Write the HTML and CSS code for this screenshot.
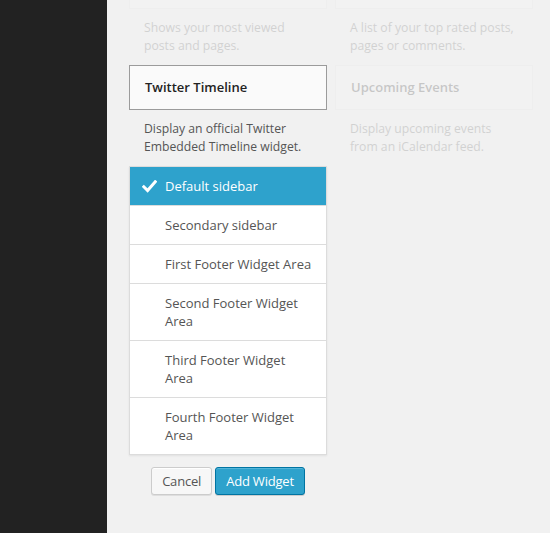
FILE: index.html
```
<!DOCTYPE html>
<html>
<head>
<meta charset="utf-8">
<link rel="stylesheet" href="styles.css">
</head>
<body>
<div class="layout">
  <aside class="adminmenu"></aside>
  <main class="content">
    <div class="widgets">
      <div class="widget faded">
        <div class="widget-top"></div>
        <p class="widget-desc">Shows your most viewed posts and pages.</p>
      </div>
      <div class="widget faded">
        <div class="widget-top"></div>
        <p class="widget-desc">A list of your top rated posts, pages or comments.</p>
      </div>
      <div class="widget">
        <div class="widget-top active"><span class="widget-title">Twitter Timeline</span></div>
        <p class="widget-desc">Display an official Twitter Embedded Timeline widget.</p>
        <div class="chooser">
          <ul class="sidebars">
            <li class="selected"><span class="slot"><svg width="15" height="13" viewBox="0 0 15 13"><polyline points="1.8,6.8 5.6,10.6 13.2,1.8" fill="none" stroke="#fff" stroke-width="3" stroke-linecap="square" stroke-linejoin="miter"/></svg></span><span>Default sidebar</span></li>
            <li><span class="slot"></span><span>Secondary sidebar</span></li>
            <li><span class="slot"></span><span>First Footer Widget Area</span></li>
            <li><span class="slot"></span><span>Second Footer Widget Area</span></li>
            <li><span class="slot"></span><span>Third Footer Widget Area</span></li>
            <li><span class="slot"></span><span>Fourth Footer Widget Area</span></li>
          </ul>
          <div class="actions">
            <button class="btn">Cancel</button>
            <button class="btn primary">Add Widget</button>
          </div>
        </div>
      </div>
      <div class="widget faded">
        <div class="widget-top"><span class="widget-title">Upcoming Events</span></div>
        <p class="widget-desc">Display upcoming events from an iCalendar feed.</p>
      </div>
    </div>
  </main>
</div>
</body>
</html>
```
FILE: styles.css
```
html, body {
  margin: 0;
  padding: 0;
  height: 100%;
  overflow: hidden;
}
body {
  font-family: "Open Sans", "Liberation Sans", sans-serif;
  font-size: 13px;
  line-height: 18px;
  color: #444;
  background: #f1f1f1;
}
.layout {
  display: flex;
  height: 533px;
}
.adminmenu {
  width: 107px;
  flex: none;
  background: #222;
}
.content {
  flex: 1;
  padding-left: 22px;
  overflow: hidden;
}
.widgets {
  display: grid;
  grid-template-columns: 198px 198px;
  column-gap: 8px;
  align-items: start;
  margin-top: -36px;
}
.widget-top {
  box-sizing: border-box;
  height: 45px;
  display: flex;
  align-items: center;
  padding: 0 15px 2px;
  background: #fafafa;
  border: 1px solid #e3e3e3;
}
.widget-top.active {
  border-color: #9b9b9b;
  background: #fafafa;
}
.widget-title {
  font-weight: 600;
  color: #222;
}
.widget-desc {
  margin: 0;
  padding: 10px 15px 10px 15px;
  font-size: 12.2px;
  color: #555;
}
.faded {
  opacity: 0.2;
}
.chooser {
  padding-bottom: 20px;
}
.sidebars {
  list-style: none;
  margin: 0;
  padding: 0;
  background: #fff;
  border: 1px solid #dcdcdc;
  box-shadow: 0 1px 2px rgba(0,0,0,0.07);
}
.sidebars li {
  display: flex;
  align-items: flex-start;
  padding: 10px 10px 10px 12px;
  border-top: 1px solid #dcdcdc;
  color: #555;
}
.sidebars li.selected {
  border-top: none;
  background: #2ea2cc;
  color: #fff;
}
.slot {
  width: 23px;
  flex: none;
  height: 18px;
  display: flex;
  align-items: center;
}
.actions {
  display: flex;
  justify-content: center;
  gap: 3px;
  margin-top: 12px;
}
.btn {
  font-family: "Open Sans", "Liberation Sans", sans-serif;
  font-size: 13px;
  height: 28px;
  line-height: 26px;
  padding: 0 10px 1px;
  border-radius: 3px;
  border: 1px solid #cccccc;
  background: #f7f7f7;
  color: #555;
  box-shadow: inset 0 1px 0 #fff, 0 1px 0 rgba(0,0,0,0.08);
  cursor: pointer;
  letter-spacing: -0.2px;
}
.btn.primary {
  padding: 0 10px 1px;
  background: #2ea2cc;
  border-color: #0074a2;
  color: #fff;
  box-shadow: inset 0 1px 0 rgba(120,200,230,0.5), 0 1px 0 rgba(0,0,0,0.15);
}
```
